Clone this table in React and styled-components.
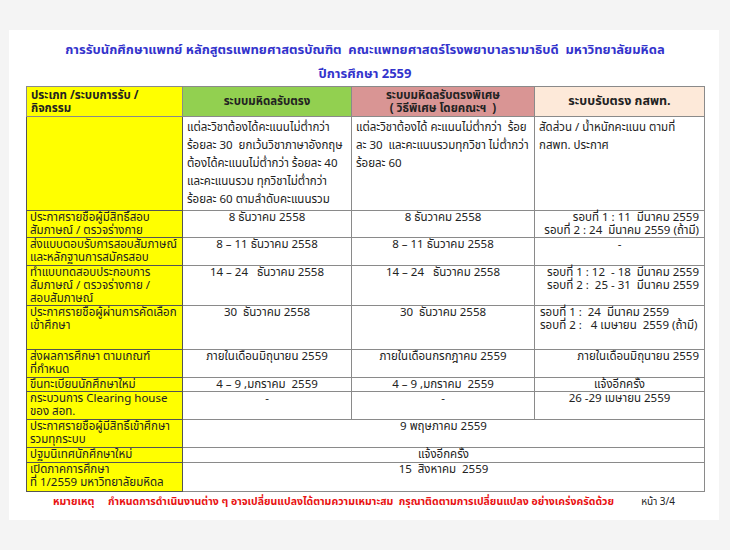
import React from 'react';
import styled, { createGlobalStyle } from 'styled-components';

const GlobalStyle = createGlobalStyle`
  html, body {
    margin: 0;
    padding: 0;
    background: #f4f4f4;
  }
  body {
    font-family: Tahoma, "Noto Sans Thai", "Loma", "Garuda", "DejaVu Sans", sans-serif;
  }
`;

const Page = styled.div`
  width: 730px;
  height: 550px;
  padding-top: 30px;
  box-sizing: border-box;
`;

const Slide = styled.div`
  margin: 0 11px 0 9px;
  height: 490px;
  background: #ffffff;
  padding: 8px 0 0 17px;
  box-sizing: border-box;
`;

const Title = styled.h1`
  margin: 0;
  width: 678px;
  text-align: center;
  color: #3333cc;
  font-size: 13px;
  font-weight: bold;
  line-height: 24px;
`;

const Table = styled.table`
  width: 678px;
  border-collapse: collapse;
  table-layout: fixed;
  font-size: 11.5px;
  color: #222;
`;

const Row = styled.tr`
  height: ${p => p.h}px;
`;

const HeadCell = styled.th`
  background: ${p => p.bg};
  border: 1px solid #8a8a8a;
  padding: 0 4px;
  font-size: ${p => p.big ? 12.5 : 11.5}px;
  line-height: 13px;
  text-align: ${p => p.align || 'center'};
  vertical-align: middle;
`;

const Label = styled.td`
  background: #ffff00;
  border: 1px solid #555;
  padding: 0 3px;
  line-height: 13px;
  vertical-align: top;
  white-space: nowrap;
  overflow: hidden;
`;

const Cell = styled.td`
  border: 1px solid #8a8a8a;
  padding: ${p => p.loose ? '2px 4px 0' : '0 5px'};
  line-height: ${p => p.loose ? 18 : 13}px;
  text-align: ${p => p.align || 'center'};
  vertical-align: top;
  white-space: pre;
`;

const Footer = styled.div`
  width: 678px;
  display: flex;
  justify-content: space-between;
  align-items: baseline;
  margin-top: 3px;
  padding: 0 29px 0 27px;
  box-sizing: border-box;
  font-size: 10.5px;
  line-height: 14px;
  font-weight: bold;
  white-space: pre;
`;

const Note = styled.span`
  color: #e81212;
`;

const PageNo = styled.span`
  color: #222;
  font-weight: normal;
  font-size: 10px;
`;

const rows = [
  { h: 27, label: ['ประกาศรายชื่อผู้มีสิทธิ์สอบ', 'สัมภาษณ์ / ตรวจร่างกาย'], a: '8 ธันวาคม 2558', b: '8 ธันวาคม 2558', c: 'รอบที่ 1 : 11  มีนาคม 2559\nรอบที่ 2 : 24  มีนาคม 2559 (ถ้ามี)', ca: 'right' },
  { h: 28, label: ['ส่งแบบตอบรับการสอบสัมภาษณ์', 'และหลักฐานการสมัครสอบ'], a: '8 – 11 ธันวาคม 2558', b: '8 – 11 ธันวาคม 2558', c: '-' },
  { h: 39, label: ['ทำแบบทดสอบประกอบการ', 'สัมภาษณ์ / ตรวจร่างกาย /', 'สอบสัมภาษณ์'], a: '14 – 24   ธันวาคม 2558', b: '14 – 24   ธันวาคม 2558', c: 'รอบที่ 1 : 12  - 18  มีนาคม 2559\nรอบที่ 2 :  25 - 31  มีนาคม 2559', ca: 'right' },
  { h: 44, label: ['ประกาศรายชื่อผู้ผ่านการคัดเลือก', 'เข้าศึกษา'], a: '30  ธันวาคม 2558', b: '30  ธันวาคม 2558', c: 'รอบที่ 1 :  24  มีนาคม 2559\nรอบที่ 2 :   4 เมษายน  2559 (ถ้ามี)', ca: 'left' },
  { h: 28, label: ['ส่งผลการศึกษา ตามเกณฑ์', 'ที่กำหนด'], a: 'ภายในเดือนมิถุนายน 2559', b: 'ภายในเดือนกรกฎาคม 2559', c: 'ภายในเดือนมิถุนายน 2559', ca: 'right' },
  { h: 13, label: ['ขึ้นทะเบียนนักศึกษาใหม่'], a: '4 – 9 ,มกราคม  2559', b: '4 – 9 ,มกราคม  2559', c: 'แจ้งอีกครั้ง' },
  { h: 28, label: ['กระบวนการ Clearing house', 'ของ สอท.'], a: '-', b: '-', c: '26 -29 เมษายน 2559' },
  { h: 28, label: ['ประกาศรายชื่อผู้มีสิทธิ์เข้าศึกษา', 'รวมทุกระบบ'], span: '9 พฤษภาคม 2559' },
  { h: 15, label: ['ปฐมนิเทศนักศึกษาใหม่'], span: 'แจ้งอีกครั้ง' },
  { h: 29, label: ['เปิดภาคการศึกษา', 'ที่ 1/2559  มหาวิทยาลัยมหิดล'], span: '15  สิงหาคม  2559' },
];

const LabelText = ({ lines }) => (
  <Label>
    {lines.map((l, i) => <div key={i}>{l}</div>)}
  </Label>
);

export default function App() {
  return (
    <Page>
      <GlobalStyle />
      <Slide>
        <Title>
          การรับนักศึกษาแพทย์ หลักสูตรแพทยศาสตรบัณฑิต&nbsp; คณะแพทยศาสตร์โรงพยาบาลรามาธิบดี&nbsp; มหาวิทยาลัยมหิดล
          <br />
          ปีการศึกษา 2559
        </Title>
        <Table>
          <colgroup>
            <col style={{ width: 156 }} />
            <col style={{ width: 169 }} />
            <col style={{ width: 183 }} />
            <col style={{ width: 170 }} />
          </colgroup>
          <tbody>
            <Row h={30}>
              <HeadCell bg="#ffff00" align="left">ประเภท /ระบบการรับ /<br />กิจกรรม</HeadCell>
              <HeadCell bg="#92d050">ระบบมหิดลรับตรง</HeadCell>
              <HeadCell bg="#d99594">ระบบมหิดลรับตรงพิเศษ<br />( วิธีพิเศษ โดยคณะฯ&nbsp; )</HeadCell>
              <HeadCell bg="#fde9d9" big>ระบบรับตรง กสพท.</HeadCell>
            </Row>
            <Row h={94}>
              <Label />
              <Cell loose align="left">{'แต่ละวิชาต้องได้คะแนนไม่ต่ำกว่า\nร้อยละ 30  ยกเว้นวิชาภาษาอังกฤษ\nต้องได้คะแนนไม่ต่ำกว่า ร้อยละ 40\nและคะแนนรวม ทุกวิชาไม่ต่ำกว่า\nร้อยละ 60 ตามลำดับคะแนนรวม'}</Cell>
              <Cell loose align="left">{'แต่ละวิชาต้องได้ คะแนนไม่ต่ำกว่า  ร้อย\nละ 30  และคะแนนรวมทุกวิชา ไม่ต่ำกว่า\nร้อยละ 60'}</Cell>
              <Cell loose align="left">{'สัดส่วน / น้ำหนักคะแนน ตามที่\nกสพท. ประกาศ'}</Cell>
            </Row>
            {rows.map((r, i) => (
              <Row h={r.h} key={i}>
                <LabelText lines={r.label} />
                {r.span ? (
                  <Cell colSpan={3}>{r.span}</Cell>
                ) : (
                  <>
                    <Cell>{r.a}</Cell>
                    <Cell>{r.b}</Cell>
                    <Cell align={r.ca}>{r.c}</Cell>
                  </>
                )}
              </Row>
            ))}
          </tbody>
        </Table>
        <Footer>
          <Note>หมายเหตุ     กำหนดการดำเนินงานต่าง ๆ อาจเปลี่ยนแปลงได้ตามความเหมาะสม  กรุณาติดตามการเปลี่ยนแปลง อย่างเคร่งครัดด้วย</Note>
          <PageNo>หน้า 3/4</PageNo>
        </Footer>
      </Slide>
    </Page>
  );
}
